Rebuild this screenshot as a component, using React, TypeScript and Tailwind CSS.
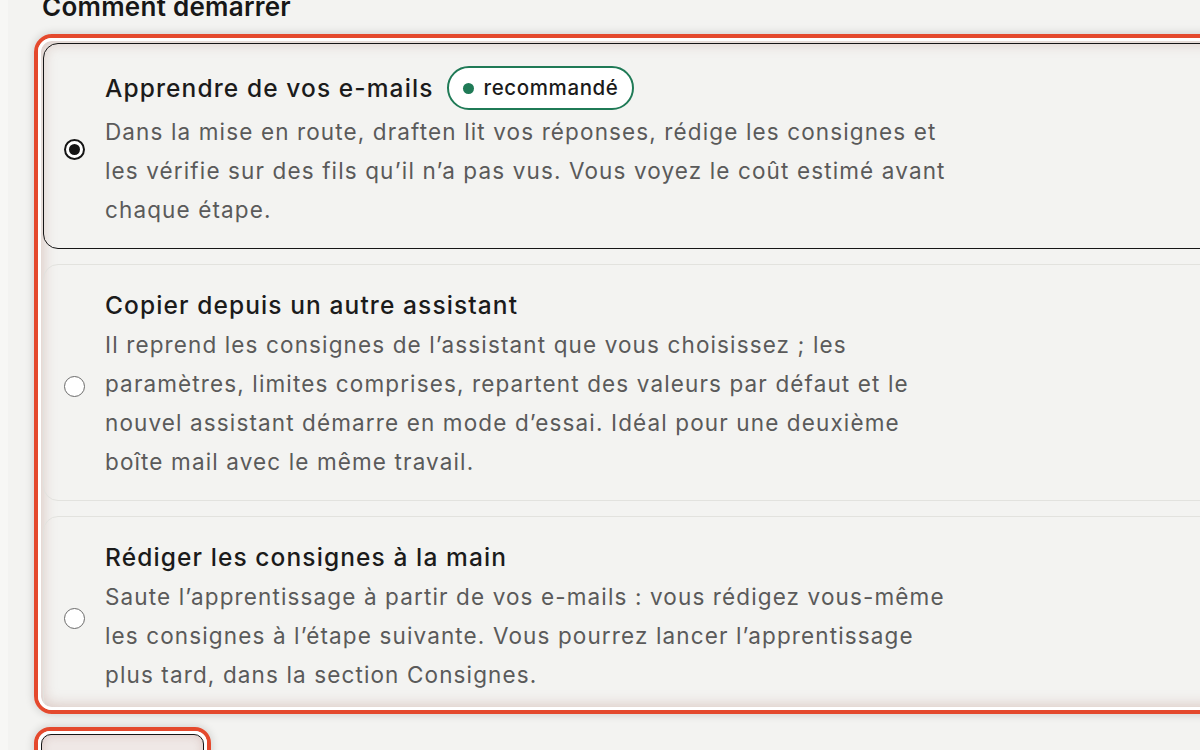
import React from 'react';

type Option = {
  id: string;
  title: string;
  badge?: string;
  lines: string[];
};

const options: Option[] = [
  {
    id: 'learn',
    title: 'Apprendre de vos e-mails',
    badge: 'recommandé',
    lines: [
      'Dans la mise en route, draften lit vos réponses, rédige les consignes et',
      'les vérifie sur des fils qu’il n’a pas vus. Vous voyez le coût estimé avant',
      'chaque étape.',
    ],
  },
  {
    id: 'copy',
    title: 'Copier depuis un autre assistant',
    lines: [
      'Il reprend les consignes de l’assistant que vous choisissez ; les',
      'paramètres, limites comprises, repartent des valeurs par défaut et le',
      'nouvel assistant démarre en mode d’essai. Idéal pour une deuxième',
      'boîte mail avec le même travail.',
    ],
  },
  {
    id: 'manual',
    title: 'Rédiger les consignes à la main',
    lines: [
      'Saute l’apprentissage à partir de vos e-mails : vous rédigez vous-même',
      'les consignes à l’étape suivante. Vous pourrez lancer l’apprentissage',
      'plus tard, dans la section Consignes.',
    ],
  },
];

function Radio({ checked }: { checked: boolean }) {
  if (checked) {
    return (
      <span className="mt-[6px] flex h-[21px] w-[21px] shrink-0 items-center justify-center rounded-full border-2 border-[#151515] bg-white">
        <span className="h-[11px] w-[11px] rounded-full bg-[#151515]" />
      </span>
    );
  }
  return <span className="mt-[6px] h-[21px] w-[21px] shrink-0 rounded-full border-[1.5px] border-[#6b6b6b] bg-white" />;
}

function OptionCard({ option, checked }: { option: Option; checked: boolean }) {
  return (
    <div
      className={`flex items-center gap-[20px] rounded-[15px] border pl-[20px] pt-5 pb-[19px] ${
        checked ? 'border-[#161616]' : 'border-[#e2e2de]'
      }`}
    >
      <Radio checked={checked} />
      <div className="flex flex-col">
        <div className="flex min-h-[40px] items-center gap-[14px]">
          <span className="text-[24.5px] leading-[40px] font-medium tracking-[0.045em] text-[#1b1b1b]">
            {option.title}
          </span>
          {option.badge && (
            <span className="my-[2px] flex h-[44px] items-center gap-[9px] rounded-full border-2 border-[#1f7a56] bg-white pl-[14px] pr-[13px]">
              <span className="h-[11px] w-[11px] rounded-full bg-[#1f7a56]" />
              <span className="text-[20.5px] font-medium tracking-[0.03em] text-[#1b1b1b]">{option.badge}</span>
            </span>
          )}
        </div>
        <p className="whitespace-nowrap text-[22.5px] leading-[39px] tracking-[0.05em] text-[#5a5a5a]">
          {option.lines.map((line, i) => (
            <React.Fragment key={i}>
              {line}
              {i < option.lines.length - 1 && <br />}
            </React.Fragment>
          ))}
        </p>
      </div>
    </div>
  );
}

export default function App() {
  return (
    <div
      className="relative h-[750px] w-[1200px] overflow-hidden bg-[#f3f3f1]"
      style={{ fontFamily: 'Inter, "Noto Sans", sans-serif' }}
    >
      <div className="absolute inset-y-0 left-0 w-[8px] bg-[#f7f7f5]" />
      <div className="pl-[34px]">
        <h2 className="-mt-[9px] pl-[8px] text-[26px] leading-[32px] font-semibold tracking-[0.01em] text-[#171717]">
          Comment démarrer
        </h2>

        <div className="mt-[11px] w-[1240px] rounded-[18px] border-4 border-[#e4492d] shadow-[0_0_8px_1px_rgba(0,0,0,0.14)]">
          <div className="flex h-[672px] flex-col gap-[15px] overflow-hidden rounded-[14px] border-[3px] border-white p-[2px] shadow-[inset_0_0_14px_2px_rgba(175,120,110,0.35)]">
            {options.map((o, i) => (
              <OptionCard key={o.id} option={o} checked={i === 0} />
            ))}
          </div>
        </div>

        <div className="mt-[13px] w-[177px] rounded-[16px] border-4 border-[#e4492d] shadow-[0_0_8px_1px_rgba(0,0,0,0.14)]">
          <div className="rounded-[12px] border-[3px] border-white">
            <div className="h-[50px] rounded-[10px] border border-[#161616] bg-[#efe8e6] shadow-[inset_0_0_10px_rgba(175,120,110,0.3)]" />
          </div>
        </div>
      </div>
    </div>
  );
}
